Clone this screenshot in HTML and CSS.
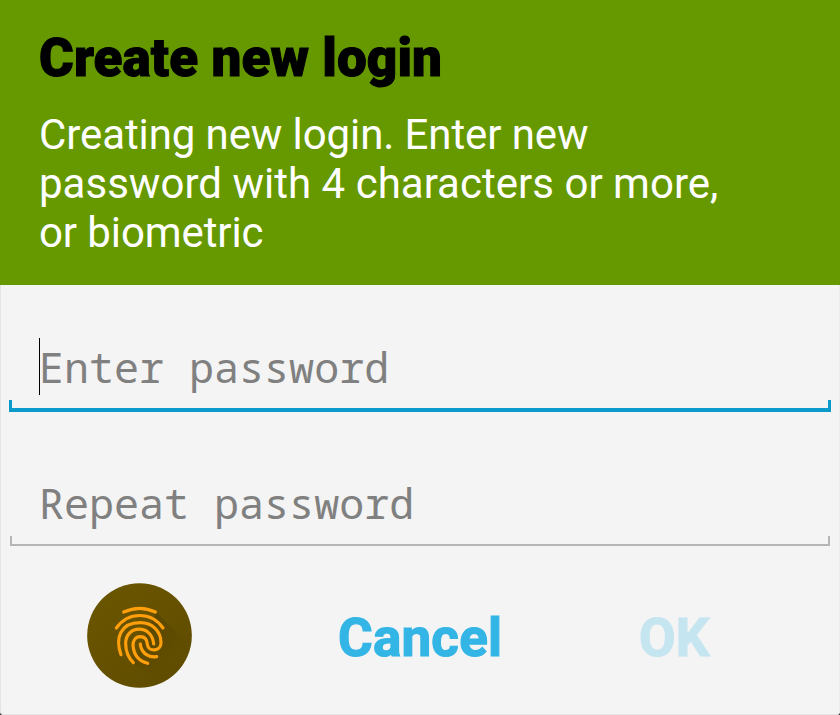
FILE: index.html
```html
<!DOCTYPE html>
<html lang="en">
<head>
<meta charset="utf-8">
<title>Create new login</title>
<link rel="stylesheet" href="styles.css">
</head>
<body>
<main class="dialog">
  <header class="header">
    <h1>Create new login</h1>
    <p>Creating new login. Enter new<br><span class="wide">password with 4 characters or more,</span><br>or biometric</p>
  </header>
  <section class="fields">
    <div class="field active"><span class="caret"></span><span class="hint">Enter password</span></div>
    <div class="field"><span class="hint">Repeat password</span></div>
  </section>
  <footer class="actions">
    <button class="finger" aria-label="Biometric">
      <svg viewBox="21 24 315 315" width="105" height="105">
        <defs>
          <linearGradient id="disc" x1="0" y1="0" x2="0.8" y2="1"><stop offset="0" stop-color="#6b5600"/><stop offset="1" stop-color="#604c00"/></linearGradient>
          <linearGradient id="shade" gradientUnits="userSpaceOnUse" x1="180" y1="180" x2="270" y2="270"><stop offset="0" stop-color="#503e00"/><stop offset="1" stop-color="#503e00" stop-opacity="0"/></linearGradient>
          <clipPath id="round"><circle cx="178.500" cy="181.500" r="157"/></clipPath>
        </defs>
        <circle cx="178.500" cy="181.500" r="157" fill="url(#disc)"/>
        <path clip-path="url(#round)" d="M228 110L350 232V350H290L160 264Z" fill="url(#shade)" opacity=".5"/>
        <g fill="none" stroke="#ff9f0c" stroke-width="9.500" stroke-linecap="round" stroke-linejoin="round">
          <path d="M131 111Q180 89 226 111"/>
          <path d="M109 159C145 109 214 109 249 159"/>
          <path d="M123 239C105 190 121 143 180 143C219 143 243 170 243 203C243 230 205 232 202 208C201 193 194 185 181 185C165 185 159 198 159 211C161 239 177 258 203 265"/>
          <path d="M160 263C141 245 137 225 137 205C137 149 217 147 221 207"/>
          <path d="M181 207C184 236 207 248 230 245"/>
        </g>
      </svg>
    </button>
    <button class="cancel">Cancel</button>
    <button class="ok" disabled>OK</button>
  </footer>
</main>
</body>
</html>
```
FILE: styles.css
```css
*,*::after{box-sizing:border-box}
body{margin:0;font-family:Roboto,sans-serif;background:#333}
.dialog{width:840px;height:715px;background:#f4f4f4;overflow:hidden;border-radius:0 0 4px 4px;box-shadow:inset 1px -1px #e4e4e4,inset -1px 0 #ececec}
.header{height:285px;background:#690;padding:25px 39px}
h1{margin:0;font-size:53px;line-height:66px;font-weight:900;letter-spacing:.1px;-webkit-text-stroke:1px currentColor}
p{margin:19px 0 0;font-size:42px;line-height:49px;color:#fff;letter-spacing:-.1px}
.wide{letter-spacing:.02px}
.fields{padding:53px 9px 0}
.field{height:75px;margin-bottom:60px;padding:5px 30px 0;position:relative}
.field::after{content:"";position:absolute;left:1px;right:1px;bottom:2px;height:10px;border:solid #b5b5b5;border-width:0 2px 2px}
.active{padding-top:4px}
.active::after{left:0;right:0;bottom:1px;height:12px;border-color:#0a9bcc;border-width:0 3px 4px}
.hint{display:block;font:41.700px/49px "Noto Sans Mono","DejaVu Sans Mono",monospace;color:#808080}
.caret{position:absolute;left:30px;top:0;width:1px;height:57px;background:#000}
.actions{display:flex;align-items:center;height:105px;margin-top:-25px;padding-left:87px}
button{display:block;border:0;padding:0;background:none;font:700 53px/60px Roboto,sans-serif;letter-spacing:.2px}
.finger,.finger svg{display:block;width:105px;height:105px}
.cancel{width:164px;margin:4px 0 0 146px;color:#33b5e5;-webkit-text-stroke:1.2px currentColor}
.ok{margin:4px 0 0 137px;color:#c5e5f0;-webkit-text-stroke:1.2px currentColor}
```
